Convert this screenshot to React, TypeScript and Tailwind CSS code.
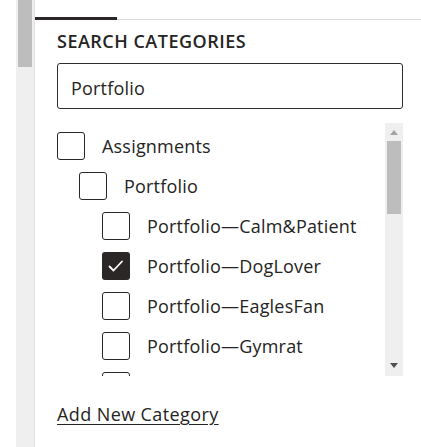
import React from 'react';

type Item = { label: string; level: number; checked?: boolean };

const items: Item[] = [
  { label: 'Assignments', level: 0 },
  { label: 'Portfolio', level: 1 },
  { label: 'Portfolio—Calm&Patient', level: 2 },
  { label: 'Portfolio—DogLover', level: 2, checked: true },
  { label: 'Portfolio—EaglesFan', level: 2 },
  { label: 'Portfolio—Gymrat', level: 2 },
  { label: 'Portfolio—Helper', level: 2 },
];

const indent = ['pl-0', 'pl-[22px]', 'pl-[45px]'];

function Box({ checked }: { checked?: boolean }) {
  if (checked) {
    return (
      <span className="flex h-[28px] w-[28px] shrink-0 items-center justify-center rounded-[3px] bg-[#2b2726]">
        <svg width="28" height="28" viewBox="0 0 28 28" fill="none">
          <path d="M7.5 14.5L11.5 18.5L20 9.5" stroke="#fff" strokeWidth="1.8" strokeLinecap="round" strokeLinejoin="round" />
        </svg>
      </span>
    );
  }
  return <span className="h-[28px] w-[28px] shrink-0 rounded-[3px] border-[1.5px] border-[#2b2726] bg-white" />;
}

function App() {
  return (
    <div className="flex h-[447px] w-[421px] overflow-hidden bg-white text-[#252423]" style={{ fontFamily: '"Open Sans", "Noto Sans", sans-serif' }}>
      <div className="w-[16px] shrink-0" />
      {/* outer scrollbar */}
      <div className="w-[18px] shrink-0 bg-[#efefef] px-[2px]">
        <div className="h-[67px] w-full bg-[#bdbdbd]" />
      </div>
      <div className="flex min-w-0 flex-1 flex-col border-l border-[#e3e3e3]">
        <div className="flex h-[20px] items-end">
          <div className="h-[3px] w-[82px] bg-[#2b2726]" />
          <div className="h-px flex-1 bg-[#dcdcdc]" />
        </div>
        <div className="flex flex-col pl-[22px] pr-[18px]">
          <h2 className="mt-[9px] text-[18px] font-semibold leading-[24px] tracking-[0.5px]">SEARCH CATEGORIES</h2>
          <div className="mt-[10px] flex h-[46px] items-center rounded-[3px] border-[1.5px] border-[#2f2d2c] pl-[13px] pt-[3px] text-[18px] leading-[24px] tracking-[0.2px]">
            Portfolio
          </div>
          <div className="mt-[14px] flex h-[253px]">
            <div className="flex flex-1 flex-col gap-[12px] overflow-hidden pt-[9px]">
              {items.map((it) => (
                <div key={it.label} className={`flex items-center gap-[17px] ${indent[it.level]}`}>
                  <Box checked={it.checked} />
                  <span className="whitespace-nowrap text-[18px] leading-[24px] tracking-[0.2px]">{it.label}</span>
                </div>
              ))}
            </div>
            <div className="flex w-[18px] shrink-0 flex-col items-center bg-[#efefef]">
              <div className="flex h-[18px] w-full items-center justify-center">
                <svg width="8" height="5" viewBox="0 0 8 5"><path d="M0 5L4 0L8 5Z" fill="#a3a3a3" /></svg>
              </div>
              <div className="h-[73px] w-[14px] bg-[#bdbdbd]" />
              <div className="flex-1" />
              <div className="flex h-[18px] w-full items-center justify-center pb-[3px]">
                <svg width="8" height="5" viewBox="0 0 8 5"><path d="M0 0L8 0L4 5Z" fill="#505050" /></svg>
              </div>
            </div>
          </div>
          <a href="#" className="mt-[26px] self-start text-[18px] leading-[24px] tracking-[0.4px] text-[#252423] underline underline-offset-[3px] decoration-1">
            Add New Category
          </a>
        </div>
      </div>
    </div>
  );
}

export default App;
